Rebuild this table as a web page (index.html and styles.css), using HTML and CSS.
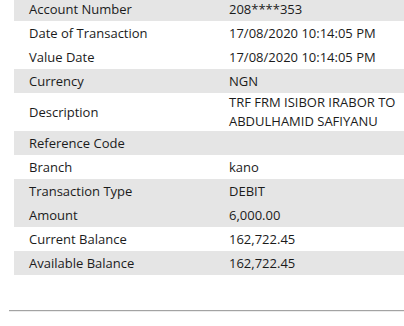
FILE: index.html
```html
<!DOCTYPE html>
<html>
<head>
<meta charset="utf-8">
<link rel="stylesheet" href="styles.css">
</head>
<body>
<div class="page">
  <table class="details">
    <tr class="shade"><td class="label">Account Number</td><td class="value">208****353</td></tr>
    <tr><td class="label">Date of Transaction</td><td class="value">17/08/2020 10:14:05 PM</td></tr>
    <tr><td class="label">Value Date</td><td class="value">17/08/2020 10:14:05 PM</td></tr>
    <tr class="shade"><td class="label">Currency</td><td class="value">NGN</td></tr>
    <tr><td class="label">Description</td><td class="value">TRF FRM ISIBOR IRABOR TO<br>ABDULHAMID SAFIYANU</td></tr>
    <tr class="shade"><td class="label">Reference Code</td><td class="value"></td></tr>
    <tr><td class="label">Branch</td><td class="value">kano</td></tr>
    <tr class="shade"><td class="label">Transaction Type</td><td class="value">DEBIT</td></tr>
    <tr class="shade"><td class="label">Amount</td><td class="value">6,000.00</td></tr>
    <tr><td class="label">Current Balance</td><td class="value">162,722.45</td></tr>
    <tr class="shade"><td class="label">Available Balance</td><td class="value">162,722.45</td></tr>
  </table>
  <div class="rule"></div>
</div>
</body>
</html>
```
FILE: styles.css
```css
html, body {
  margin: 0;
  padding: 0;
  background: #ffffff;
  overflow: hidden;
}
.page {
  padding-left: 9px;
  font-family: "Open Sans", "Noto Sans", sans-serif;
  font-size: 13px;
  color: #1b1b1b;
}
.details {
  margin-top: -3px;
  margin-left: 5px;
  width: 390px;
  border-collapse: collapse;
}
.details td {
  height: 24px;
  padding: 0 0 0 15px;
  line-height: 19px;
  vertical-align: middle;
}
.details .label {
  width: 185px;
}
.shade td {
  background: #e5e5e5;
}
.rule {
  margin-top: 35px;
  height: 0;
  border-top: 1px solid #a3a3a3;
  border-bottom: 1px solid #ececec;
}
```
